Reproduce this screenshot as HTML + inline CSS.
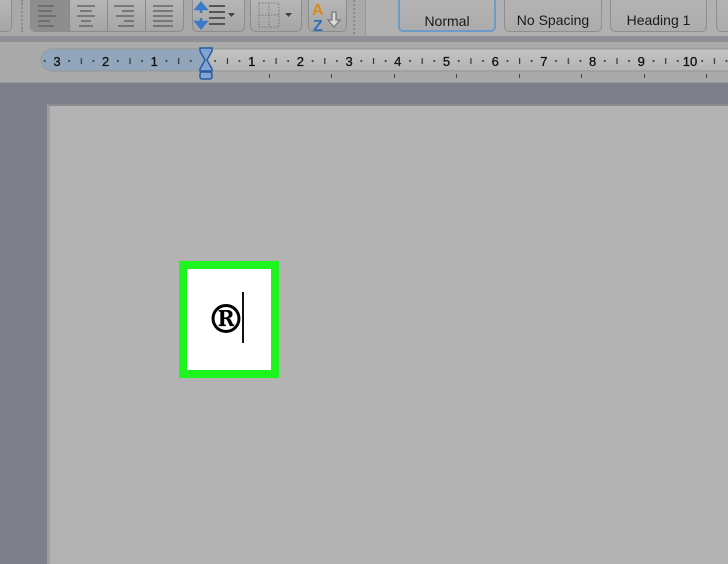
<!DOCTYPE html>
<html><head><meta charset="utf-8"><style>
*{margin:0;padding:0;box-sizing:border-box}
body{width:728px;height:546px;overflow:hidden;background:#7d8088;position:relative;font-family:"Liberation Sans",sans-serif}
.a{position:absolute}
.btn{position:absolute;top:-4px;height:36px;border:1px solid #8c8c8c;border-radius:5px;background:linear-gradient(#b8b8b8,#a6a6a6)}
.sty{position:absolute;top:-4px;height:36px;border:1px solid #8e8e8e;border-radius:5px;background:linear-gradient(#b4b4b4,#acacac);font-size:14px;color:#1a1a1a;text-align:center;padding-top:15px}
</style></head><body>
<div class="a" style="left:0;top:0;width:728px;height:38px;background:#a9a9a9"></div>
<div class="a" style="left:365px;top:0;width:363px;height:36px;background:#b1b1b1;border-left:1px solid #999"></div>
<div class="a" style="left:0;top:36px;width:728px;height:6px;background:#8e9096"></div>
<div class="a" style="left:0;top:42px;width:728px;height:41px;background:#aaaaab;border-bottom:1px solid #999"></div>
<div class="btn" style="left:-10px;width:22px"></div>
<div class="a" style="left:21px;top:0;width:2px;height:32px;border-left:2px dotted #8a8a8a"></div>
<div class="btn" style="left:30px;width:154px;padding:0"></div>
<div class="a" style="left:31px;top:0;width:38px;height:31px;background:#8e8e8e;border-radius:0 0 0 5px"></div>
<div class="a" style="left:69px;top:0;width:1px;height:31px;background:#888"></div>
<div class="a" style="left:107px;top:0;width:1px;height:31px;background:#888"></div>
<div class="a" style="left:145px;top:0;width:1px;height:31px;background:#888"></div>
<svg class="a" style="left:30px;top:0" width="155" height="32">
<g stroke="#666" stroke-width="1.5">
<path d="M8 6h16M8 11h14M8 16h18M8 21h12M8 26h16"/>
<path d="M47 6h18M50 11h12M47 16h18M51 21h10M49 26h14"/>
<path d="M84 6h20M92 11h12M86 16h18M94 21h10M88 26h16"/>
<path d="M123 6h20M123 11h20M123 16h20M123 21h20M123 26h20"/>
</g></svg>
<div class="btn" style="left:192px;width:53px"></div>
<svg class="a" style="left:192px;top:0" width="53" height="32">
<path d="M9 3l-5 6h10z M9 9v4" stroke="#3a7bc8" fill="#3a7bc8" stroke-width="2.5"/>
<path d="M9 28l-5-6h10z M9 22v-4" stroke="#3a7bc8" fill="#3a7bc8" stroke-width="2.5"/>
<g stroke="#555" stroke-width="2"><path d="M17 6h16M17 12h16M17 18h16M17 24h16"/></g>
<path d="M36 13h7l-3.5 4z" fill="#444"/></svg>
<div class="btn" style="left:250px;width:52px"></div>
<svg class="a" style="left:250px;top:0" width="52" height="32">
<g stroke="#777" stroke-width="1" stroke-dasharray="1.5 1.5" fill="none"><rect x="9" y="3" width="20" height="24"/><path d="M19 3v24M9 15h20"/></g>
<path d="M35 13h7l-3.5 4z" fill="#444"/></svg>
<div class="btn" style="left:308px;width:39px"></div>
<svg class="a" style="left:308px;top:0" width="40" height="32">
<text x="4" y="15" font-size="16" font-weight="bold" fill="#d88a1c" font-family="Liberation Sans">A</text>
<text x="5" y="31" font-size="16" font-weight="bold" fill="#2f6fc0" font-family="Liberation Sans">Z</text>
<path d="M24 12v8h-4l6 7 6-7h-4v-8z" fill="#ddd" stroke="#777" stroke-width="1.3"/></svg>
<div class="a" style="left:353px;top:0;width:2px;height:34px;border-left:2px dotted #8a8a8a"></div>
<div class="sty" style="left:398px;width:98px;border:2px solid #6d9bc8">Normal</div>
<div class="sty" style="left:504px;width:98px">No Spacing</div>
<div class="sty" style="left:610px;width:97px">Heading 1</div>
<div class="sty" style="left:716px;width:30px"></div>
<svg class="a" style="left:0;top:42px" width="728" height="41">
<defs><pattern id="p" x="203" y="0" width="48.7" height="41" patternUnits="userSpaceOnUse">
<circle cx="12.2" cy="19" r="1" fill="#333"/><rect x="23.8" y="16" width="1.2" height="6" fill="#333"/><circle cx="36.5" cy="19" r="1" fill="#333"/></pattern>
<linearGradient id="g" x1="0" y1="0" x2="0" y2="1"><stop offset="0" stop-color="#c4c4c4"/><stop offset="1" stop-color="#b3b3b3"/></linearGradient></defs>
<rect x="41" y="7" width="700" height="22" rx="11" fill="url(#g)" stroke="#949494"/>
<path d="M52 7.5h154v21H52a10.5 10.5 0 0 1 0-21z" fill="#92a6bb"/>
<rect x="41" y="7" width="700" height="22" fill="url(#p)"/>
<g font-size="13" fill="#111" text-anchor="middle" font-family="Liberation Sans" stroke="#111" stroke-width="0.3">
<text x="57" y="24">3</text><text x="105.6" y="24">2</text><text x="154.3" y="24">1</text>
<text x="251.7" y="24">1</text><text x="300.4" y="24">2</text><text x="349.1" y="24">3</text><text x="397.8" y="24">4</text><text x="446.5" y="24">5</text><text x="495.2" y="24">6</text><text x="543.9" y="24">7</text><text x="592.6" y="24">8</text><text x="641.3" y="24">9</text><text x="690" y="24">10</text></g>
<g fill="#444"><rect x="269" y="32" width="1" height="4"/><rect x="331" y="32" width="1" height="4"/><rect x="394" y="32" width="1" height="4"/><rect x="456" y="32" width="1" height="4"/><rect x="519" y="32" width="1" height="4"/><rect x="581" y="32" width="1" height="4"/><rect x="644" y="32" width="1" height="4"/><rect x="706" y="32" width="1" height="4"/></g>
<path d="M200 6h12v3l-5 9l5 9v2h-12v-2l5-9l-5-9z" fill="#7fa5d6" stroke="#2d5a9a" stroke-width="1.5"/>
<rect x="200" y="30" width="12" height="7" rx="2" fill="#7fa5d6" stroke="#2d5a9a" stroke-width="1.5"/>
</svg>
<div class="a" style="left:47px;top:104px;width:700px;height:460px;background:#b3b3b3;border-left:3px solid #9c9ea3;border-top:2px solid #8a8c92"></div>
<div class="a" style="left:179px;top:261px;width:100px;height:117px;background:#fff;border:8px solid #1ef41e"></div>
<div class="a" style="left:206px;top:290px;font-family:'DejaVu Serif','Liberation Serif',serif;font-weight:bold;font-size:40px;color:#000;line-height:60px">®</div>
<div class="a" style="left:242px;top:292px;width:1.5px;height:51px;background:#111"></div>
</body></html>
